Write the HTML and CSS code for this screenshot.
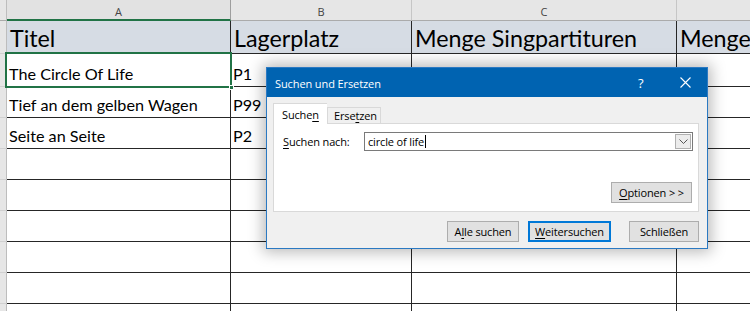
FILE: index.html
```html
<!DOCTYPE html>
<html lang="de">
<head>
<meta charset="utf-8">
<title>Suchen und Ersetzen</title>
<link rel="stylesheet" href="styles.css">
</head>
<body>
<div class="sheet">
  <div class="grid">
    <div class="ch corner"></div>
    <div class="ch ch-active">A</div>
    <div class="ch">B</div>
    <div class="ch">C</div>
    <div class="ch ch-last"></div>

    <div class="rh"></div>
    <div class="c hd">Titel</div>
    <div class="c hd">Lagerplatz</div>
    <div class="c hd">Menge Singpartituren</div>
    <div class="c hd last">Menge</div>

    <div class="rh"></div>
    <div class="c sel">The Circle Of Life</div>
    <div class="c">P1</div>
    <div class="c"></div>
    <div class="c last"></div>

    <div class="rh"></div>
    <div class="c">Tief an dem gelben Wagen</div>
    <div class="c">P99</div>
    <div class="c"></div>
    <div class="c last"></div>

    <div class="rh"></div>
    <div class="c">Seite an Seite</div>
    <div class="c">P2</div>
    <div class="c"></div>
    <div class="c last"></div>

    <div class="rh"></div><div class="c"></div><div class="c"></div><div class="c"></div><div class="c last"></div>
    <div class="rh"></div><div class="c"></div><div class="c"></div><div class="c"></div><div class="c last"></div>
    <div class="rh"></div><div class="c"></div><div class="c"></div><div class="c"></div><div class="c last"></div>
    <div class="rh"></div><div class="c"></div><div class="c"></div><div class="c"></div><div class="c last"></div>
    <div class="rh"></div><div class="c"></div><div class="c"></div><div class="c"></div><div class="c last"></div>
    <div class="rh"></div><div class="c"></div><div class="c"></div><div class="c"></div><div class="c last"></div>
  </div>

  <div class="dialog">
    <div class="titlebar">
      <span class="title">Suchen und Ersetzen</span>
      <span class="help">?</span>
      <svg class="close" width="11" height="11" viewBox="0 0 11 11"><path d="M0.5 0.5 L10.5 10.5 M10.5 0.5 L0.5 10.5" stroke="#fff" stroke-width="1.1" fill="none"/></svg>
    </div>
    <div class="dbody">
      <div class="tabs">
        <div class="tab active">Suche<u>n</u></div>
        <div class="tab">Erse<u>t</u>zen</div>
      </div>
      <div class="panel">
        <div class="findrow">
          <label class="lbl"><u>S</u>uchen nach:</label>
          <div class="combo">
            <div class="ctext">circle of life<span class="caret"></span></div>
            <div class="dd">
              <svg width="9" height="5" viewBox="0 0 9 5"><path d="M0.5 0.5 L4.5 4.5 L8.5 0.5" stroke="#555" stroke-width="1" fill="none"/></svg>
            </div>
          </div>
        </div>
        <div class="optrow">
          <div class="btn opt"><u>O</u>ptionen &gt; &gt;</div>
        </div>
      </div>
      <div class="btnrow">
        <div class="btn b-all">A<u>l</u>le suchen</div>
        <div class="btn b-next focus"><u>W</u>eitersuchen</div>
        <div class="btn b-close">Schließen</div>
      </div>
    </div>
  </div>
</div>
</body>
</html>
```

FILE: styles.css
```css
html, body {
  margin: 0;
  padding: 0;
  background: #ffffff;
}
body {
  width: 750px;
  height: 311px;
  overflow: hidden;
}
.sheet {
  position: relative;
  width: 750px;
  height: 311px;
  overflow: hidden;
}
.grid {
  display: grid;
  grid-template-columns: 7px 224px 181px 265px 1fr;
  grid-template-rows: 21px 33px 33px repeat(8, 31px);
}
.grid > div {
  box-sizing: border-box;
}
.ch {
  background: #e6e6e6;
  border-right: 1px solid #c6c6c6;
  border-bottom: 1px solid #ababab;
  font-family: "Open Sans", "Noto Sans", sans-serif;
  font-size: 11px;
  color: #444;
  display: flex;
  align-items: center;
  justify-content: center;
  padding-top: 3px;
}
.ch.corner {
  border-right: 1px solid #bdbdbd;
}
.ch.ch-active {
  background: #e2e2e2;
  border-bottom: 2px solid #217346;
  border-right: 1px solid #9e9e9e;
  padding-top: 4px;
}
.ch.ch-last {
  border-right: none;
}
.rh {
  background: #e6e6e6;
  border-right: 1px solid #bdbdbd;
  border-bottom: 1px solid #d0d0d0;
}
.c {
  border-right: 1px solid #262626;
  border-bottom: 1px solid #262626;
  font-family: "Lato", "Open Sans", sans-serif;
  font-size: 16.2px;
  color: #000;
  display: flex;
  align-items: flex-end;
  padding: 0 0 3px 2px;
  white-space: nowrap;
  overflow: hidden;
}
.c.last {
  border-right: none;
}
.c.hd {
  background: #d6dce4;
  font-size: 23.3px;
  padding: 0 0 1px 3px;
}
.c.sel {
  position: relative;
  overflow: visible;
}
.c.sel::after {
  content: "";
  position: absolute;
  left: -2px;
  top: -2px;
  right: -2px;
  bottom: -2px;
  border: 2px solid #217346;
}
.c.sel::before {
  content: "";
  position: absolute;
  right: -4px;
  bottom: -4px;
  width: 5px;
  height: 5px;
  background: #217346;
  border: 1px solid #fff;
  box-sizing: border-box;
  z-index: 1;
}

/* dialog */
.dialog {
  position: absolute;
  left: 266px;
  top: 67px;
  width: 442px;
  height: 182px;
  box-sizing: border-box;
  border: 1px solid #2b79c2;
  background: #f0f0f0;
  box-shadow: 0 0 14px 3px rgba(0, 0, 0, 0.28);
  font-family: "Open Sans", "Noto Sans", sans-serif;
  font-size: 11px;
  letter-spacing: -0.15px;
  color: #000;
  display: flex;
  flex-direction: column;
}
.titlebar {
  height: 29px;
  background: #0063b1;
  color: #fff;
  display: flex;
  align-items: center;
  padding: 0 0 0 8px;
  flex-shrink: 0;
}
.title {
  flex: 1;
  font-size: 11px;
  letter-spacing: -0.1px;
  padding-top: 1px;
}
.help {
  font-size: 13px;
  width: 12px;
  margin-right: 30px;
  padding-top: 1px;
}
.close {
  margin-right: 16px;
}
.dbody {
  flex: 1;
  display: flex;
  flex-direction: column;
  padding: 6px 8px 0 6px;
}
.tabs {
  display: flex;
  align-items: flex-end;
  height: 20px;
  position: relative;
  z-index: 1;
}
.tab {
  box-sizing: border-box;
  height: 16px;
  padding: 0 6px;
  border: 1px solid #d9d9d9;
  border-bottom: none;
  background: #f0f0f0;
  display: flex;
  align-items: center;
  width: 54px;
}
.tab.active {
  height: 21px;
  background: #fff;
  margin-bottom: -1px;
  border-right: none;
  padding-left: 8px;
}
.panel {
  height: 89px;
  box-sizing: border-box;
  border: 1px solid #d9d9d9;
  background: #fff;
  display: flex;
  flex-direction: column;
  padding: 8px 5px 0 9px;
}
.findrow {
  display: flex;
  align-items: center;
  height: 19px;
}
.lbl {
  width: 81px;
}
.combo {
  flex: 1;
  height: 19px;
  box-sizing: border-box;
  border: 1px solid #7a7a7a;
  display: flex;
  align-items: stretch;
  background: #fff;
}
.ctext {
  flex: 1;
  display: flex;
  align-items: center;
  padding-left: 3px;
}
.caret {
  display: inline-block;
  width: 1px;
  height: 13px;
  background: #000;
  margin-left: 1px;
}
.dd {
  width: 16px;
  box-sizing: border-box;
  border: 1px solid #b0b0b0;
  background: #ececec;
  display: flex;
  align-items: center;
  justify-content: center;
  margin: 1px 1px 1px 0;
}
.optrow {
  display: flex;
  justify-content: flex-end;
  margin-top: 31px;
  padding-right: 1px;
}
.btn {
  box-sizing: border-box;
  height: 21px;
  border: 1px solid #adadad;
  background: #e1e1e1;
  display: flex;
  align-items: center;
  justify-content: center;
}
.btn.opt {
  width: 81px;
  height: 21px;
}
.btnrow {
  display: flex;
  justify-content: flex-end;
  margin-top: 9px;
}
.b-all {
  width: 72px;
}
.b-next {
  width: 83px;
  margin-left: 9px;
}
.b-next.focus {
  border: 2px solid #0078d7;
}
.b-close {
  width: 70px;
  margin-left: 18px;
}
u {
  text-decoration-thickness: 1px;
  text-underline-offset: 2px;
}
```
